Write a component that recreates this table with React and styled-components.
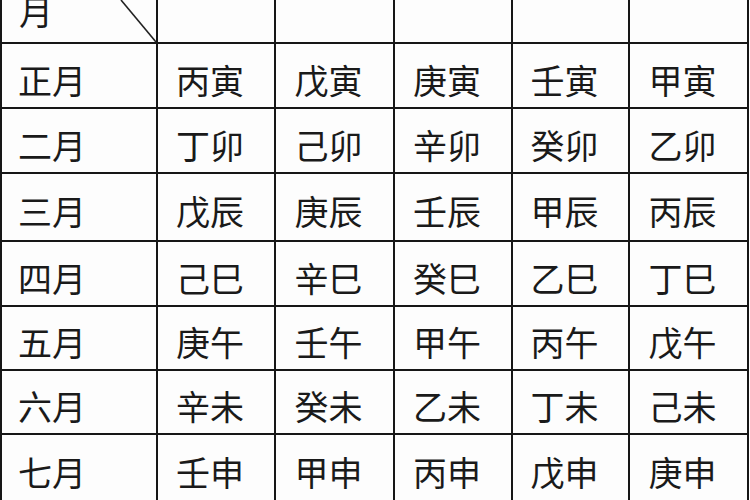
import React from 'react';
import styled, { createGlobalStyle } from 'styled-components';

const GlobalStyle = createGlobalStyle`
    html, body {
        margin: 0;
        padding: 0;
        background: #ffffff;
    }
    body {
        width: 750px;
        height: 500px;
        overflow: hidden;
        font-family: "Noto Sans CJK SC", "Noto Sans CJK TC", sans-serif;
    }
`;

// row heights between the 2px rules, taken from the picture
const rowHeights = [42, 63, 63, 66, 63, 62, 62, 66];

const Grid = styled.div`
    display: grid;
    width: 749px;
    box-sizing: border-box;
    padding: 0 2px 0 2px;
    gap: 2px;
    background: #161616;
    grid-template-columns: 154px 116px 117px 116px 115px 117px;
    grid-template-rows: ${rowHeights.map((h) => h + 'px').join(' ')};
`;

const Cell = styled.div`
    position: relative;
    overflow: hidden;
    background: #fdfdfd;
    display: flex;
    align-items: center;
    justify-content: ${(p) => (p.$month ? 'flex-start' : 'center')};
    box-sizing: border-box;
    padding: ${(p) => (p.$month ? '8px 0 0 16px' : '8px 12px 0 0')};
    font-size: 34px;
    line-height: 1;
    font-weight: 400;
    color: #1a1a1a;
    white-space: nowrap;
`;

const Corner = styled(Cell)`
    align-items: flex-end;
    padding: 0 0 14px 17px;
`;

const Slash = styled.svg`
    position: absolute;
    left: 0;
    top: 0;
    width: 100%;
    height: 100%;
`;

const months = [
    ['正月', '丙寅', '戊寅', '庚寅', '壬寅', '甲寅'],
    ['二月', '丁卯', '己卯', '辛卯', '癸卯', '乙卯'],
    ['三月', '戊辰', '庚辰', '壬辰', '甲辰', '丙辰'],
    ['四月', '己巳', '辛巳', '癸巳', '乙巳', '丁巳'],
    ['五月', '庚午', '壬午', '甲午', '丙午', '戊午'],
    ['六月', '辛未', '癸未', '乙未', '丁未', '己未'],
    ['七月', '壬申', '甲申', '丙申', '戊申', '庚申'],
];

export default function App() {
    return (
        <>
            <GlobalStyle />
            <Grid>
                <Corner $month>
                    月
                    <Slash viewBox="0 0 154 42" preserveAspectRatio="none">
                        <line x1="119" y1="0" x2="154" y2="42" stroke="#222" strokeWidth="1.6" />
                    </Slash>
                </Corner>
                {[1, 2, 3, 4, 5].map((i) => (
                    <Cell key={'h' + i} />
                ))}
                {months.map((row) =>
                    row.map((text, i) => (
                        <Cell key={row[0] + i} $month={i === 0}>
                            {text}
                        </Cell>
                    ))
                )}
            </Grid>
        </>
    );
}
